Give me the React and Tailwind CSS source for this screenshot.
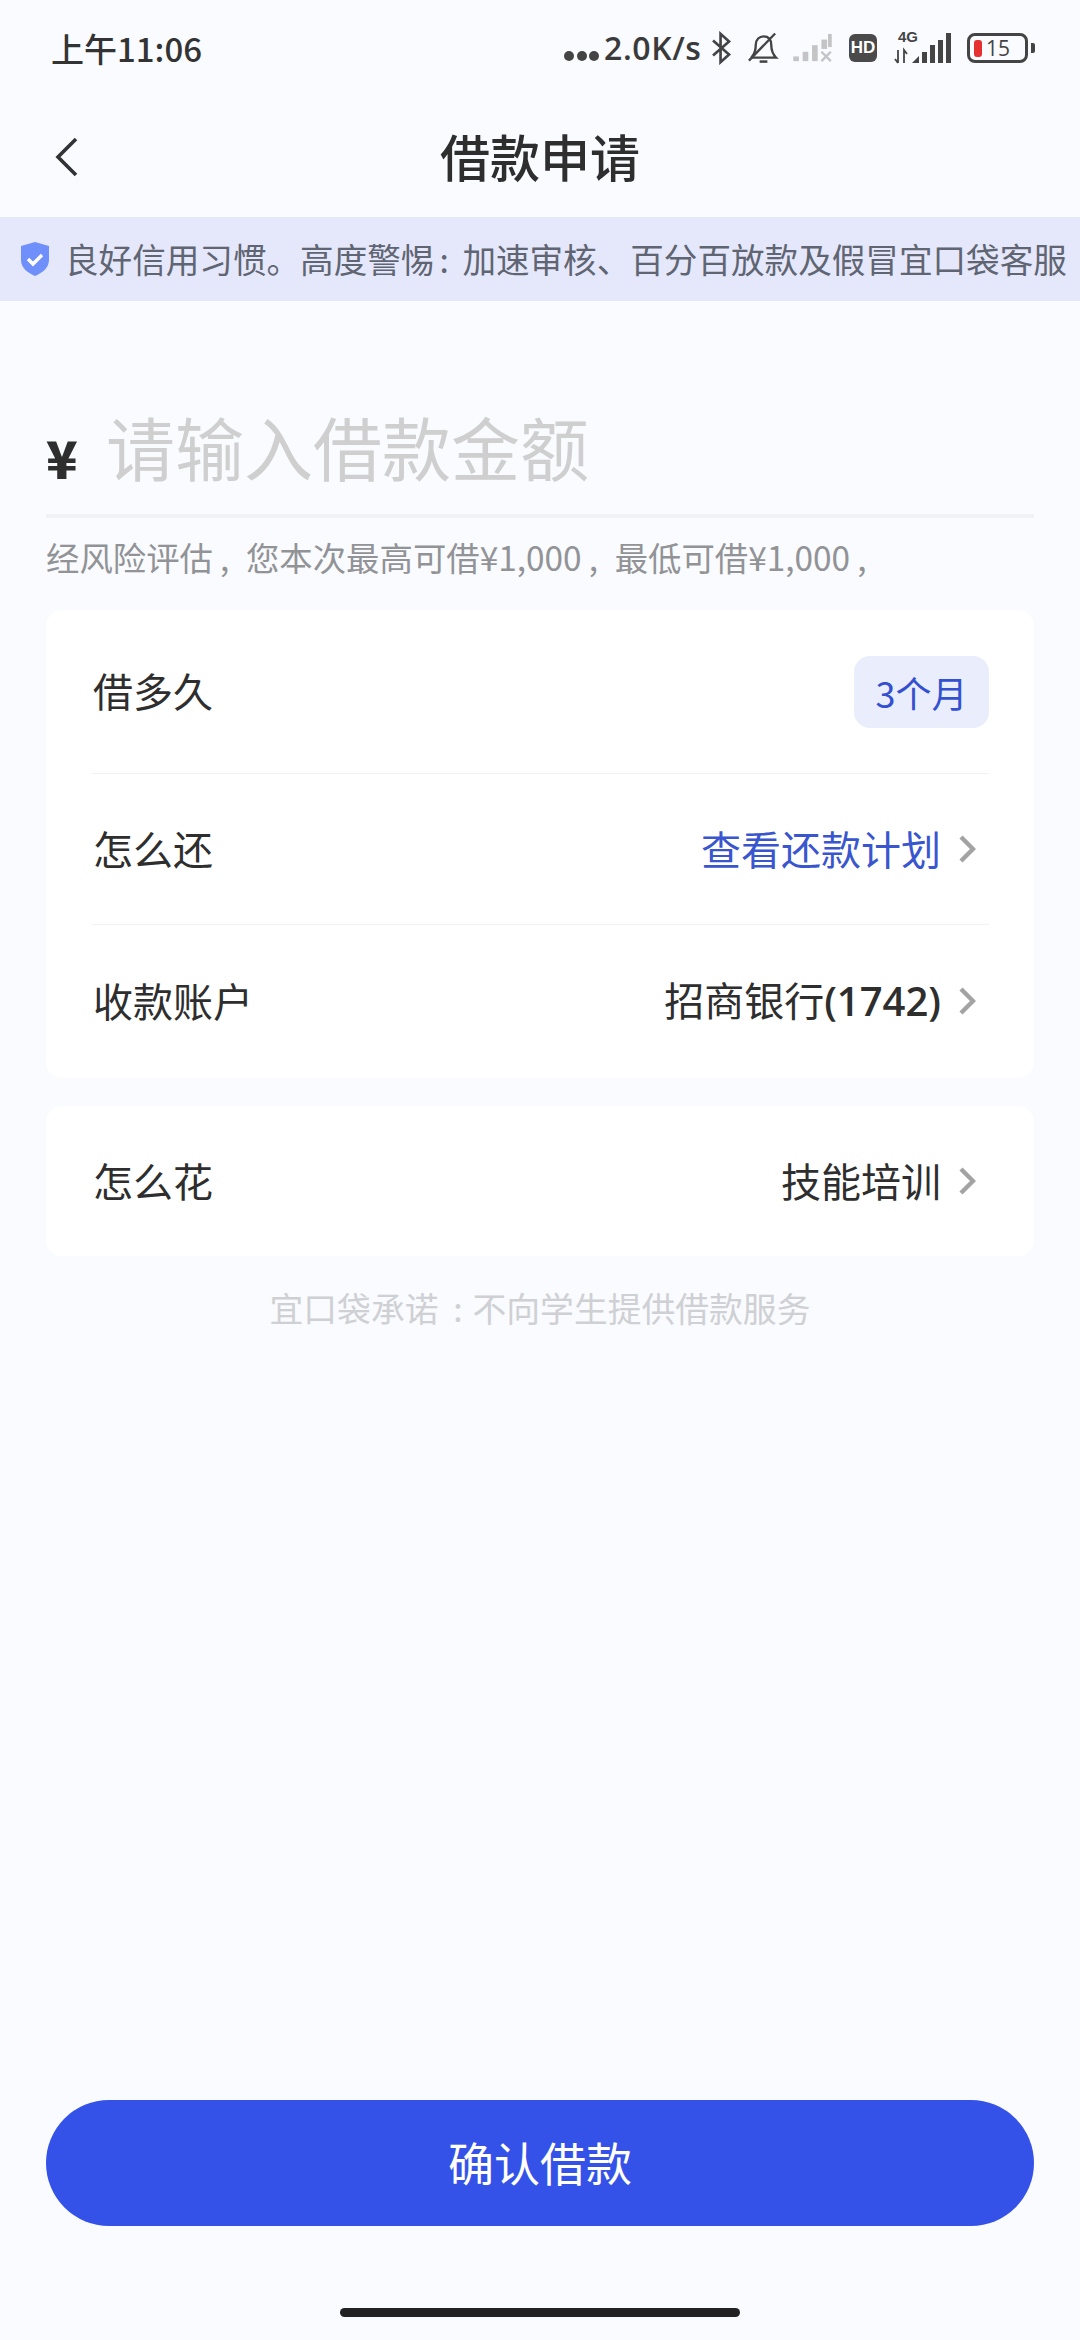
import React from 'react';

const FONT = '"Noto Sans CJK SC", "Noto Sans", sans-serif';
const OPEN = { fontFamily: '"Open Sans", sans-serif' };

const Chevron = () => (
  <svg width="18" height="30" viewBox="0 0 18 30" fill="none" className="ml-[17px] mr-[13px] shrink-0">
    <path d="M3 3 L15 15 L3 27" stroke="#a3a3a3" strokeWidth="4.4" strokeLinejoin="miter" />
  </svg>
);

// half-width punctuation sitting in a full-width cell
const Punct = ({ children, className }) => (
  <span className={`inline-block ${className}`}>{children}</span>
);

const StatusIcons = () => (
  <div className="flex items-center">
    <div className="flex items-center gap-[2.5px] mt-[15px]">
      <span className="w-[10px] h-[10px] rounded-full bg-[#444]" />
      <span className="w-[10px] h-[10px] rounded-full bg-[#444]" />
      <span className="w-[10px] h-[10px] rounded-full bg-[#444]" />
    </div>
    <span className="ml-[5px] w-[98px] text-[32px] leading-[40px] font-semibold text-[#3a3a3a] tracking-[0.6px] whitespace-nowrap" style={OPEN}>2.0K/s</span>
    <svg width="21" height="34" viewBox="0 0 22 36" fill="none" className="ml-[9px]">
      <path d="M2 10 L19 25 L10 33 V3 L19 11 L2 26" stroke="#444" strokeWidth="2.8" />
    </svg>
    <svg width="33" height="34" viewBox="0 0 34 34" fill="none" className="ml-[15px]">
      <path d="M5 26 C9 22 9 18 9 14 C9 8 13 5 17 5 C22 5 25 8 25 14 C25 19 26 23 30 27 H5 Z" stroke="#444" strokeWidth="2.4" />
      <path d="M2 30 L29 2" stroke="#444" strokeWidth="2.4" />
      <path d="M13 31 H21" stroke="#444" strokeWidth="2.6" />
    </svg>
    <svg width="40" height="30" viewBox="0 0 42 32" className="ml-[13px]">
      <rect x="0" y="25" width="6" height="5" fill="#c4c4c4" />
      <rect x="10" y="20" width="6" height="10" fill="#c4c4c4" />
      <rect x="20" y="13" width="6" height="17" fill="#c4c4c4" />
      <rect x="30" y="7" width="6" height="10" fill="#c4c4c4" />
      <rect x="37" y="1" width="4" height="14" fill="#c4c4c4" />
      <path d="M30 20 L40 30 M40 20 L30 30" stroke="#c4c4c4" strokeWidth="2.6" />
    </svg>
    <div className="ml-[16px] w-[28px] h-[28px] rounded-[6px] bg-[#4a4a4a] flex items-center justify-center text-[17px] font-bold text-white" style={{ fontFamily: '"Liberation Sans", sans-serif' }}>HD</div>
    <div className="relative ml-[16px] w-[58px] h-[32px]">
      <span className="absolute left-[5px] -top-[3px] text-[15px] leading-[16px] font-bold text-[#444]" style={{ fontFamily: '"Liberation Sans", sans-serif' }}>4G</span>
      <svg width="58" height="32" viewBox="0 0 58 32" className="absolute left-0 top-0">
        <path d="M5 18 V31 M2 27 L5 31 M11 31 V18 L14 22" stroke="#444" strokeWidth="1.8" fill="none" />
        <path d="M19 31 L26 24 V31 Z" fill="#444" />
        <rect x="29" y="20" width="5" height="11" fill="#444" />
        <rect x="37" y="13" width="5" height="18" fill="#444" />
        <rect x="45" y="8" width="5" height="23" fill="#444" />
        <rect x="53" y="1" width="5" height="30" fill="#444" />
      </svg>
    </div>
    <div className="ml-[16px] w-[61px] h-[30px] rounded-[8px] border-[3px] border-[#444] flex items-center">
      <span className="ml-[4px] w-[8px] h-[17px] rounded-[3px] bg-[#e5312f]" />
      <span className="ml-[4px] text-[21px] leading-[24px] text-[#444]" style={OPEN}>15</span>
    </div>
    <span className="ml-[3px] w-[4px] h-[10px] rounded-r-[2px] bg-[#444]" />
  </div>
);

const Row = ({ label, children, divider, className }) => (
  <div className={`ml-[46px] mr-[45px] flex items-center justify-between ${divider ? 'border-b border-[#f0f1f4]' : ''} ${className}`}>
    <span className="pl-[1px] text-[40px] leading-[56px] -mt-[3px] text-[#2e2e2e]">{label}</span>
    {children}
  </div>
);

export default function App() {
  return (
    <div className="w-[1080px] h-[2340px] bg-[#f9fbff] flex flex-col overflow-hidden" style={{ fontFamily: FONT }}>
      {/* status bar */}
      <div className="h-[96px] pl-[51px] pr-[45px] flex items-center justify-between">
        <span className="text-[33px] leading-[44px] font-medium text-[#333]">上午11:06</span>
        <StatusIcons />
      </div>

      {/* nav */}
      <div className="h-[121px] relative flex items-center justify-center">
        <svg width="24" height="40" viewBox="0 0 24 40" fill="none" className="absolute left-[55px] top-[41px]">
          <path d="M21 2 L3 20 L21 38" stroke="#333" strokeWidth="3.6" />
        </svg>
        <span className="text-[50px] leading-[64px] -mt-[4px] font-medium text-[#2e2e2e]">借款申请</span>
      </div>

      {/* notice banner */}
      <div className="h-[84px] bg-[#e5e8fa] flex items-center pl-[20px] overflow-hidden">
        <svg width="30" height="36" viewBox="0 0 30 36" className="shrink-0">
          <path d="M15 1 L29 5 V19 C29 27 22 32 15 35 C8 32 1 27 1 19 V5 Z" fill="#6f8ffb" />
          <path d="M8 18 L13 23 L22 14" stroke="#fff" strokeWidth="3.4" fill="none" />
        </svg>
        <span className="ml-[15px] text-[33.6px] leading-[44px] text-[#5f6572] whitespace-nowrap">良好信用习惯。高度警惕<Punct className="w-[28px] pl-[5px]">:</Punct>加速审核、百分百放款及假冒宜口袋客服</span>
      </div>

      {/* amount */}
      <div className="mx-[46px] mt-[102px] h-[115px] border-b-[4px] border-[#f1f2f5] flex items-start">
        <span className="mt-[22px] w-[28px] text-[52px] leading-[64px] font-black text-[#2e2e2e]">¥</span>
        <span className="ml-[32px] -mt-[3px] text-[69px] leading-[92px] text-[#cfcfcf] whitespace-nowrap">请输入借款金额</span>
      </div>
      <div className="mx-[46px] mt-[16px] text-[33.4px] leading-[46px] text-[#929396] whitespace-nowrap">经风险评估<Punct className="w-[33px] pl-[7px]">,</Punct>您本次最高可借¥1,000<Punct className="w-[33px] pl-[7px]">,</Punct>最低可借¥1,000<Punct className="w-[33px] pl-[7px]">,</Punct></div>

      {/* loan details */}
      <div className="mx-[46px] mt-[30px] h-[468px] bg-white rounded-[16px] flex flex-col">
        <Row label="借多久" divider className="h-[164px]">
          <span className="w-[135px] h-[72px] rounded-[16px] bg-[#e9edfc] flex items-center justify-center text-[36px] leading-[44px] text-[#3350d1]">3个月</span>
        </Row>
        <Row label="怎么还" divider className="h-[151px]">
          <span className="flex items-center">
            <span className="text-[40px] leading-[56px] -mt-[3px] text-[#3a56cf]">查看还款计划</span>
            <Chevron />
          </span>
        </Row>
        <Row label="收款账户" className="h-[152px]">
          <span className="flex items-center">
            <span className="text-[40px] leading-[56px] -mt-[3px] text-[#2e2e2e]">招商银行<span className="font-semibold" style={OPEN}>(1742)</span></span>
            <Chevron />
          </span>
        </Row>
      </div>

      <div className="mx-[46px] mt-[28px] h-[150px] bg-white rounded-[16px] flex flex-col">
        <Row label="怎么花" className="h-[150px]">
          <span className="flex items-center">
            <span className="text-[40px] leading-[56px] -mt-[3px] text-[#2e2e2e]">技能培训</span>
            <Chevron />
          </span>
        </Row>
      </div>

      <div className="mt-[29px] text-center text-[33.8px] leading-[46px] text-[#cfd0d3]">宜口袋承诺<Punct className="w-[34px] pl-[5px]">:</Punct>不向学生提供借款服务</div>

      {/* submit */}
      <div className="mt-auto mx-[46px] mb-[114px] h-[126px] rounded-full bg-[#3452e8] flex items-center justify-center">
        <span className="text-[46px] leading-[60px] -mt-[4px] text-white">确认借款</span>
      </div>

      {/* home indicator */}
      <div className="relative h-0">
        <div className="absolute left-[340px] -top-[32px] w-[400px] h-[9px] rounded-full bg-[#222]" />
      </div>
    </div>
  );
}
